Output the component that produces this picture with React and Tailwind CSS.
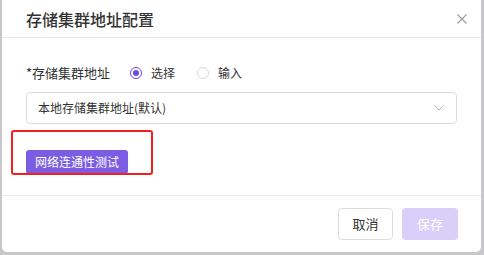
import React, { useState } from 'react';

const font = { fontFamily: '"Noto Sans CJK SC", "Noto Sans", sans-serif' };

function Radio({ checked, label, onClick }) {
  return (
    <button onClick={onClick} className="flex items-center gap-[9px]">
      <span
        className={`flex h-[12px] w-[12px] items-center justify-center rounded-full border ${
          checked ? 'border-[#6a4ce6]' : 'border-[#d9d9d9]'
        }`}
      >
        {checked && <span className="h-[6px] w-[6px] rounded-full bg-[#6a4ce6]"></span>}
      </span>
      <span className="text-[12px] leading-[20px] text-[#333]">{label}</span>
    </button>
  );
}

export default function App() {
  const [mode, setMode] = useState('select');

  return (
    <div className="h-[255px] w-[484px] overflow-hidden bg-[#c8c8ca]" style={font}>
      <div className="relative ml-[2px] flex h-[252px] w-[479px] flex-col rounded-b-[5px] bg-white">
        {/* Header */}
        <div className="flex h-[38px] items-center justify-between border-b border-[#ebebeb] pl-[24px] pr-[14px]">
          <h3 className="text-[16px] font-medium leading-[20px] text-[#333]">存储集群地址配置</h3>
          <svg width="10" height="10" viewBox="0 0 10 10">
            <path d="M0.5 0.5L9.5 9.5M9.5 0.5L0.5 9.5" stroke="#9a9a9a" strokeWidth="1.1" />
          </svg>
        </div>

        {/* Body */}
        <div className="flex h-[158px] flex-col border-b border-[#ebebeb] px-[24px] pt-[25px]">
          <div className="flex h-[20px] items-center">
            <span className="w-[104px] text-[13px] text-[#333]">*存储集群地址</span>
            <div className="flex items-center gap-[22px]">
              <Radio checked={mode === 'select'} label="选择" onClick={() => setMode('select')} />
              <Radio checked={mode === 'input'} label="输入" onClick={() => setMode('input')} />
            </div>
          </div>

          <div className="mt-[9px] flex h-[32px] w-[431px] items-center justify-between rounded-[4px] border border-[#dcdcdc] pl-[11px] pr-[12px]">
            <span className="text-[12px] text-[#333]">本地存储集群地址(默认)</span>
            <svg width="10" height="6" viewBox="0 0 10 6">
              <path d="M0.5 0.5L5 5L9.5 0.5" fill="none" stroke="#b5b5b5" strokeWidth="1" />
            </svg>
          </div>

          <div className="mt-[24px]">
            <button className="h-[24px] rounded-[3px] bg-[#7b5de3] px-[9px] text-[12px] leading-[24px] text-white">
              网络连通性测试
            </button>
          </div>
        </div>

        {/* Footer */}
        <div className="flex flex-1 items-start justify-end gap-[9px] pr-[23px] pt-[12px]">
          <button className="h-[32px] w-[55px] rounded-[4px] border border-[#dcdcdc] text-[13px] text-[#333]">
            取消
          </button>
          <button className="h-[32px] w-[56px] rounded-[4px] bg-[#d8d0f8] text-[13px] text-white">
            保存
          </button>
        </div>

        {/* annotation */}
        <div className="absolute left-[9px] top-[130px] h-[45px] w-[142px] rounded-[3px] border-2 border-[#f51d1d]"></div>
      </div>
    </div>
  );
}
